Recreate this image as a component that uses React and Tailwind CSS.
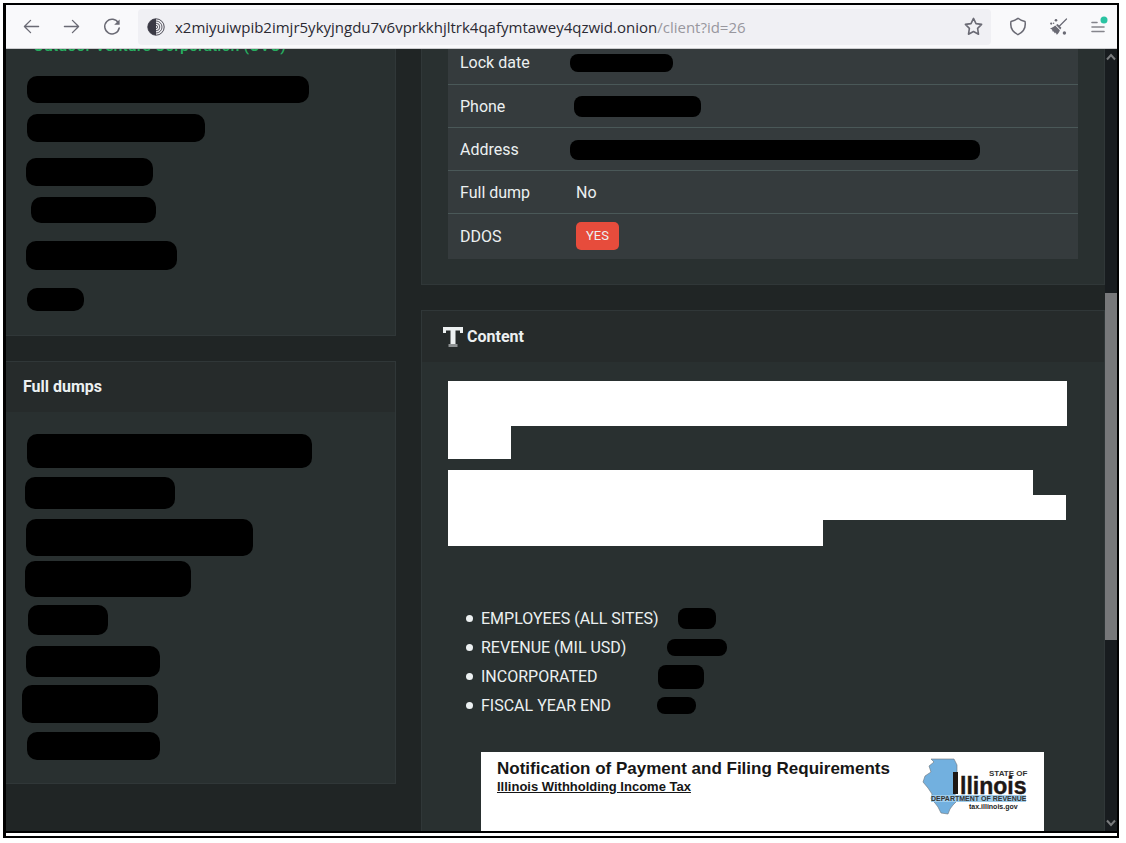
import React from 'react';

// x offset, size and spacing of every blacked-out line
const clientLines = [
  'w-[282px] h-[27px] ml-[21px]',
  'w-[178px] h-[28px] ml-[21px] mt-[11px]',
  'w-[127px] h-[28px] ml-[20px] mt-[16px]',
  'w-[125px] h-[26px] ml-[25px] mt-[11px]',
  'w-[151px] h-[29px] ml-[20px] mt-[18px]',
  'w-[57px] h-[23px] ml-[21px] mt-[18px]',
];

const dumpLines = [
  'w-[285px] h-[34px] ml-[21px]',
  'w-[150px] h-[32px] ml-[19px] mt-[9px]',
  'w-[227px] h-[37px] ml-[20px] mt-[10px]',
  'w-[166px] h-[36px] ml-[19px] mt-[5px]',
  'w-[80px] h-[30px] ml-[22px] mt-[8px]',
  'w-[134px] h-[31px] ml-[20px] mt-[11px]',
  'w-[136px] h-[38px] ml-[16px] mt-[8px]',
  'w-[133px] h-[28px] ml-[21px] mt-[9px]',
];

const facts = [
  { label: 'EMPLOYEES (ALL SITES)', bar: 'w-[38px] h-[21px] ml-[197px]' },
  { label: 'REVENUE (MIL USD)', bar: 'w-[60px] h-[17px] ml-[186px]' },
  { label: 'INCORPORATED', bar: 'w-[46px] h-[24px] ml-[177px]' },
  { label: 'FISCAL YEAR END', bar: 'w-[39px] h-[17px] ml-[176px]' },
];

const Redacted = ({ className }) => (
  <div className={`bg-black rounded-[10px] ${className}`}></div>
);

const IconButton = ({ label, className = '', children }) => (
  <button type="button" aria-label={label} className={`flex items-center justify-center shrink-0 text-[#6a6a74] ${className}`}>
    {children}
  </button>
);

const Toolbar = () => (
  <header className="flex items-center h-11 shrink-0 bg-[#f9f9fb] border-b border-[#cccccf]">
    <IconButton label="Back" className="w-5 ml-[15px]">
      <svg width="17" height="17" viewBox="0 0 18 18" fill="none" stroke="currentColor" strokeWidth="1.4" strokeLinecap="round" strokeLinejoin="round">
        <path d="M16.5 9H1.5M8 2.5L1.5 9L8 15.5" />
      </svg>
    </IconButton>
    <IconButton label="Forward" className="w-5 ml-5">
      <svg width="17" height="17" viewBox="0 0 18 18" fill="none" stroke="currentColor" strokeWidth="1.4" strokeLinecap="round" strokeLinejoin="round">
        <path d="M1.5 9H16.5M10 2.5L16.5 9L10 15.5" />
      </svg>
    </IconButton>
    <IconButton label="Reload" className="w-5 ml-[21px]">
      <svg width="18" height="18" viewBox="0 0 18 18" fill="none" stroke="currentColor" strokeWidth="1.5" strokeLinecap="round">
        <path d="M15.4 5A7.3 7.3 0 1 0 16.2 10" />
        <path d="M16.6 1.4V6.8H11.2Z" fill="currentColor" stroke="none" />
      </svg>
    </IconButton>
    <div className="flex items-center flex-1 min-w-0 h-9 ml-4 pl-[9px] pr-2 bg-[#f0f0f4] rounded">
      <svg width="18" height="18" viewBox="0 0 18 18" className="shrink-0" fill="none" stroke="#3a3944">
        <circle cx="9" cy="9" r="8.2" strokeWidth=".9" />
        <path d="M9 .8A8.2 8.2 0 0 0 9 17.2Z" fill="#3a3944" stroke="none" />
        <path d="M9 3A6 6 0 0 1 9 15M9 5.2A3.8 3.8 0 0 1 9 12.8M9 7.4A1.6 1.6 0 0 1 9 10.6" strokeWidth=".8" />
      </svg>
      <div className="flex-1 min-w-0 ml-2.5 truncate font-['Open_Sans','Noto_Sans',sans-serif] text-[15px] leading-6 text-[#2b2a33]">
        x2miyuiwpib2imjr5ykyjngdu7v6vprkkhjltrk4qafymtawey4qzwid.onion<span className="text-[#98979e]">/client?id=26</span>
      </div>
      <IconButton label="Bookmark this page" className="w-5">
        <svg width="19" height="19" viewBox="0 0 19 19" fill="none" stroke="currentColor" strokeWidth="1.6" strokeLinejoin="round">
          <path d="M9.5 1.4L12 6.6L17.6 7.4L13.6 11.4L14.5 17.2L9.5 14.5L4.5 17.2L5.4 11.4L1.4 7.4L7 6.6Z" />
        </svg>
      </IconButton>
    </div>
    <IconButton label="Security level" className="w-5 ml-[17px]">
      <svg width="18" height="19" viewBox="0 0 18 19" fill="none" stroke="currentColor" strokeWidth="1.5" strokeLinejoin="round">
        <path d="M9 1.2C10.6 2.6 13 3.8 16 4.4C17 9.8 14.4 15 9 17.7C3.6 15 1 9.8 2 4.4C5 3.8 7.4 2.6 9 1.2Z" />
      </svg>
    </IconButton>
    <IconButton label="New identity" className="w-5 ml-5">
      <svg width="19" height="18" viewBox="0 0 19 18" fill="currentColor">
        <path d="M17.5 1L10.5 8" stroke="currentColor" strokeWidth="1.2" strokeLinecap="round" />
        <path d="M8.6 6L12.4 9.8L11.3 11.4L7 7.1Z" />
        <path d="M6.2 7.6L10.9 12.3C10.4 14.1 9.2 15.8 7.7 16.8L6.8 14.4L6 15.4L4.6 13.4L3.6 13.6L3 11.6L1 10.4C2.7 10.1 4.7 9.1 6.2 7.6Z" />
        <circle cx="2.2" cy="5.6" r="1.1" />
        <circle cx="7" cy="2.2" r="1.3" />
        <circle cx="4.6" cy="5.2" r=".7" />
        <circle cx="15.4" cy="15" r="1.7" />
      </svg>
    </IconButton>
    <IconButton label="Open application menu" className="w-5 ml-[21px] mr-2">
      <svg width="20" height="22" viewBox="0 0 20 22" fill="none">
        <path d="M3 6.5H8M3 11H15M3 15.5H15" stroke="#85858c" strokeWidth="1.6" strokeLinecap="round" />
        <circle cx="15" cy="4" r="3.5" fill="#2ac3a2" />
      </svg>
    </IconButton>
  </header>
);

const ClientTable = () => (
  <table className="w-full bg-[#353b3d] text-left">
    <tbody>
      <tr className="h-[43px] border-b border-[#4a5858]">
        <th scope="row" className="w-[116px] pl-3 pt-0.5 font-normal">Lock date</th>
        <td className="pt-0.5"><Redacted className="w-[103px] h-[18px] ml-1.5 rounded-lg" /></td>
      </tr>
      <tr className="h-[43px] border-b border-[#4a5858]">
        <th scope="row" className="pl-3 pt-0.5 font-normal">Phone</th>
        <td className="pt-0.5"><Redacted className="w-[127px] h-[21px] ml-2.5 rounded-lg" /></td>
      </tr>
      <tr className="h-[43px] border-b border-[#4a5858]">
        <th scope="row" className="pl-3 pt-0.5 font-normal">Address</th>
        <td className="pt-0.5"><Redacted className="w-[410px] h-[20px] ml-1.5 rounded-lg" /></td>
      </tr>
      <tr className="h-[43px] border-b border-[#4a5858]">
        <th scope="row" className="pl-3 pt-0.5 font-normal">Full dump</th>
        <td className="pl-3 pt-0.5">No</td>
      </tr>
      <tr className="h-[46px]">
        <th scope="row" className="pl-3 pt-0.5 font-normal">DDOS</th>
        <td className="pl-3">
          <span className="inline-block px-2.5 py-1 rounded-[5px] bg-[#e74c3c] text-[13px] leading-5">YES</span>
        </td>
      </tr>
    </tbody>
  </table>
);

const IllinoisLogo = () => (
  <svg width="106" height="60" viewBox="0 0 106 60" className="shrink-0" fontFamily="'Liberation Sans', Arial, sans-serif" fontWeight="bold">
    <path d="M9 1H32L35 7V31L33 37L35 43L31 47L28 51L26 56L19 55L16 49L13 45L9 41L10 36L6 30L1 24L3 18L9 14L7 8L12 4Z" fill="#72b0df" stroke="#6b747a" strokeWidth=".6" />
    <rect x="9" y="37" width="95" height="7" fill="#9fcdec" />
    <rect x="31" y="14" width="5" height="22" fill="#1d1715" />
    <text x="67" y="18" fontSize="8" fill="#333">STATE OF</text>
    <text x="38" y="36" fontSize="23" fill="#1d1715" stroke="#1d1715" strokeWidth=".4">llinois</text>
    <text x="9" y="43" fontSize="7" fill="#333">DEPARTMENT OF REVENUE</text>
    <text x="47" y="51" fontSize="7" fill="#222">tax.illinois.gov</text>
  </svg>
);

const Scrollbar = () => (
  <div className="flex flex-col items-center w-3 shrink-0 bg-[#181c1f] text-[#7a7c7e]">
    <svg width="10" height="8" viewBox="0 0 10 8" className="mt-1" fill="none" stroke="currentColor" strokeWidth="2">
      <path d="M1 6.5L5 2L9 6.5" />
    </svg>
    <div className="w-full h-[347px] mt-[232px] bg-[#77787a]"></div>
    <svg width="10" height="8" viewBox="0 0 10 8" className="mt-auto mb-1" fill="none" stroke="currentColor" strokeWidth="2">
      <path d="M1 1.5L5 6L9 1.5" />
    </svg>
  </div>
);

export default function App() {
  return (
    <div className="h-screen bg-white pt-[3px] pl-[3px] pr-[7px] pb-[5px]">
      <div className="flex flex-col h-full border-l-[3px] border-r-2 border-y-2 border-black pb-[3px]">
        <div className="flex flex-col flex-1 min-h-0 border-b-2 border-black">
          <Toolbar />
          <div className="flex flex-1 min-h-0 bg-[#202525] font-[Roboto,sans-serif] text-[16px] leading-6 text-[#ecf0f1]">
            <main className="flex items-start flex-1 min-w-0 gap-[25px] overflow-hidden">
              <div className="w-[390px] shrink-0">
                <section className="bg-[#293030] border-r border-b border-[#303738] pb-6">
                  <p className="-mt-[15px] pl-[27px] text-[#27ae60] font-medium">Outdoor Venture Corporation (OVC)</p>
                  <div className="pt-[18px]">
                    {clientLines.map((line) => <Redacted key={line} className={line} />)}
                  </div>
                </section>
                <section className="mt-[25px] bg-[#293030] border-t border-r border-b border-[#303738]">
                  <h2 className="h-[50px] pl-[17px] bg-[#262b2b] leading-[50px] font-bold">Full dumps</h2>
                  <div className="pt-[22px] pb-[23px]">
                    {dumpLines.map((line) => <Redacted key={line} className={line} />)}
                  </div>
                </section>
              </div>

              <div className="flex-1 min-w-0">
                <section className="-mt-[9px] px-[26px] pb-[25px] bg-[#293030] border border-[#303738]">
                  <ClientTable />
                </section>
                <section className="mt-[25px] bg-[#293030] border border-[#303738]">
                  <h2 className="flex items-center gap-1 h-[51px] pl-[21px] bg-[#262b2b] font-bold">
                    <svg width="20" height="20" viewBox="0 0 20 20" fill="currentColor">
                      <path d="M0 0H20V6H17V3.5H12.5V17H7.5V3.5H3V6H0Z" />
                      <path d="M5.5 17H14.5V20H5.5Z" fill="#8d9192" />
                    </svg>
                    Content
                  </h2>
                  <div className="px-[26px] pt-[19px]">
                    <div className="mr-[11px] h-[45px] bg-white"></div>
                    <div className="w-[63px] h-[33px] bg-white"></div>
                    <div className="mt-[11px] mr-[45px] h-[25px] bg-white"></div>
                    <div className="mr-3 h-[25px] bg-white"></div>
                    <div className="w-[375px] h-[26px] bg-white"></div>
                    <ul className="mt-[58px] pl-[33px]">
                      {facts.map(({ label, bar }) => (
                        <li key={label} className="relative flex items-center h-[29px]">
                          <span className="absolute -left-[15px] w-[7px] h-[7px] rounded-full bg-[#ecf0f1]"></span>
                          {label}
                          <div className="absolute left-0">
                            <Redacted className={`${bar} rounded-lg`} />
                          </div>
                        </li>
                      ))}
                    </ul>
                    <article className="flex justify-between ml-[33px] mr-[34px] mt-[32px] h-[200px] pl-4 pr-4 pt-1.5 bg-white text-[#161616] font-['Liberation_Sans',Arial,sans-serif] font-bold">
                      <div>
                        <h3 className="text-[17px] leading-[22px]">Notification of Payment and Filing Requirements</h3>
                        <p className="text-[13px] leading-[14px] underline">Illinois Withholding Income Tax</p>
                      </div>
                      <IllinoisLogo />
                    </article>
                  </div>
                </section>
              </div>
            </main>
            <Scrollbar />
          </div>
        </div>
      </div>
    </div>
  );
}
